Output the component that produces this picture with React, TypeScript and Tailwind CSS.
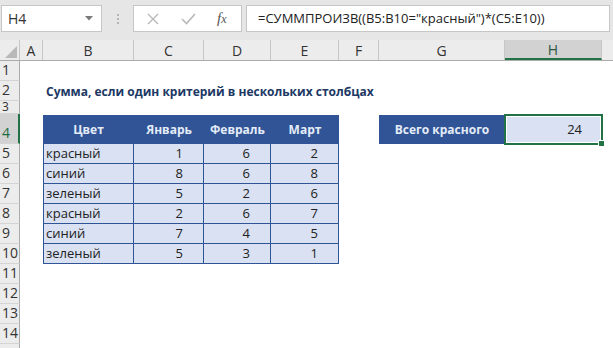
import React from 'react';

const FONT = "font-['Open_Sans','Noto_Sans',sans-serif]";

const COLUMNS = [
  { name: 'A', cls: 'w-[23px]' },
  { name: 'B', cls: 'w-[91px]' },
  { name: 'C', cls: 'w-[70px]' },
  { name: 'D', cls: 'w-[67px]' },
  { name: 'E', cls: 'w-[68px]' },
  { name: 'F', cls: 'w-[40px]' },
  { name: 'G', cls: 'w-[126px]' },
  { name: 'H', cls: 'w-[97px]' },
];

const DATA: [string, number, number, number][] = [
  ['красный', 1, 6, 2],
  ['синий', 8, 6, 8],
  ['зеленый', 5, 2, 6],
  ['красный', 2, 6, 7],
  ['синий', 7, 4, 5],
  ['зеленый', 5, 3, 1],
];

const RowHead: React.FC<{ n: number; active?: boolean; short?: boolean }> = ({ n, active, short }) => (
  <div
    className={`w-[20px] shrink-0 overflow-hidden flex pl-[2px] leading-none border-b border-[#d4d4d4] ${
      short ? 'items-start text-[12px]' : 'items-end pb-[3px] text-[14px]'
    } ${
      active ? 'bg-[#d2d2d2] border-r-2 border-r-[#217346] text-[#1e6b3f]' : 'bg-[#ececec] border-r border-r-[#ababab] text-[#333]'
    }`}
  >
    {n}
  </div>
);

const Toolbar: React.FC = () => (
  <div className="h-[40px] bg-[#e6e6e6] flex items-start pt-[5px] pl-px">
    <div className="w-[101px] h-[27px] bg-white border border-[#c6c6c6] flex items-center justify-between pl-[6px] pr-[8px]">
      <span className="text-[14px] text-[#333]">H4</span>
      <svg width="8" height="5" viewBox="0 0 8 5">
        <path d="M0 0h8L4 4.5z" fill="#7a7a7a" />
      </svg>
    </div>
    <div className="w-[31px] h-[27px] flex flex-col items-center justify-center gap-[2px]">
      <span className="w-[2px] h-[2px] bg-[#b5b5b5]" />
      <span className="w-[2px] h-[2px] bg-[#b5b5b5]" />
      <span className="w-[2px] h-[2px] bg-[#b5b5b5]" />
    </div>
    <div className="w-[109px] h-[27px] bg-white border border-[#c6c6c6] flex items-center pl-[13px]">
      <svg width="12" height="12" viewBox="0 0 12 12">
        <path d="M1 1l10 10M11 1L1 11" stroke="#b8b8b8" strokeWidth="1.3" />
      </svg>
      <svg width="15" height="12" viewBox="0 0 15 12" className="ml-[22px]">
        <path d="M1 6l4.5 4.5L14 1" stroke="#b8b8b8" strokeWidth="1.6" fill="none" />
      </svg>
      <span className="ml-[21px] font-['Liberation_Serif',serif] italic text-[15px] text-[#555] leading-none">
        f<span className="text-[12px]">x</span>
      </span>
    </div>
    <div className="ml-[4px] w-[364px] h-[27px] bg-white border border-[#c6c6c6] flex items-center pl-[11px] text-[13px] text-[#222] whitespace-nowrap">
      =СУММПРОИЗВ((B5:B10="красный")*(C5:E10))
    </div>
  </div>
);

const ColumnHeaders: React.FC = () => (
  <div className="flex h-[21px] bg-[#ececec] border-b border-[#ababab]">
    <div className="w-[20px] shrink-0 border-r border-[#c6c6c6] flex items-end justify-end p-[2px]">
      <svg width="12" height="12" viewBox="0 0 12 12">
        <path d="M12 0V12H0z" fill="#b9b9b9" />
      </svg>
    </div>
    {COLUMNS.map((c) => (
      <div
        key={c.name}
        className={`${c.cls} shrink-0 flex items-center justify-center text-[14px] border-r border-[#c6c6c6] ${
          c.name === 'H' ? 'bg-[#d2d2d2] border-b-2 border-b-[#217346] text-[#2a5540]' : 'text-[#333]'
        }`}
      >
        {c.name}
      </div>
    ))}
    <div className="flex-1" />
  </div>
);

const App: React.FC = () => {
  return (
    <div className={`w-[613px] h-[348px] overflow-hidden bg-white ${FONT}`}>
      <Toolbar />
      <ColumnHeaders />

      {/* Row 1 */}
      <div className="flex h-[20px]">
        <RowHead n={1} />
      </div>

      {/* Row 2: title */}
      <div className="flex h-[20px]">
        <RowHead n={2} />
        <div className="w-[23px] shrink-0" />
        <div className="pl-[3px] pt-px flex items-center whitespace-nowrap text-[12px] font-bold text-[#203864]">
          Сумма, если один критерий в нескольких столбцах
        </div>
      </div>

      {/* Row 3 */}
      <div className="flex h-[13px]">
        <RowHead n={3} short />
      </div>

      {/* Row 4: headers */}
      <div className="flex h-[30px]">
        <RowHead n={4} active />
        <div className="w-[23px] shrink-0" />
        <div className="flex mt-px bg-[#305496] text-[#e4ecf8] font-bold text-[12px]">
          {['Цвет', 'Январь', 'Февраль', 'Март'].map((h, i) => (
            <div key={h} className={`${COLUMNS[i + 1].cls} flex items-center justify-center pt-px`}>
              {h}
            </div>
          ))}
        </div>
        <div className="w-[40px] shrink-0" />
        <div className="w-[126px] shrink-0 mt-px pt-px bg-[#305496] text-[#e4ecf8] font-bold text-[12px] flex items-center justify-center">
          Всего красного
        </div>
        <div className="relative w-[97px] shrink-0 mt-px bg-[#d9e1f2] flex items-center justify-end pr-[20px] text-[13px] text-[#222]">
          24
          <div className="absolute -left-px -top-px -right-px -bottom-px border-2 border-[#217346]">
            <div className="w-full h-full border border-white" />
          </div>
          <div className="absolute -right-[3px] -bottom-[3px] w-[7px] h-[7px] bg-[#217346] border border-white" />
        </div>
      </div>

      {/* Rows 5-10 */}
      {DATA.map((r, i) => (
        <div key={i} className="flex h-[20px]">
          <RowHead n={i + 5} />
          <div className="w-[23px] shrink-0" />
          <div className="w-[91px] shrink-0 bg-[#d9e1f2] border-x border-b border-[#2f5597] flex items-center pl-[2px] text-[13px] text-[#222]">
            {r[0]}
          </div>
          {[r[1], r[2], r[3]].map((v, j) => (
            <div
              key={j}
              className={`${COLUMNS[j + 2].cls} shrink-0 bg-[#d9e1f2] border-r border-b border-[#2f5597] flex items-center justify-end pr-[20px] text-[13px] text-[#222]`}
            >
              {v}
            </div>
          ))}
        </div>
      ))}

      {/* Rows 11-15 */}
      {[11, 12, 13, 14, 15].map((n) => (
        <div key={n} className="flex h-[20px]">
          <RowHead n={n} />
        </div>
      ))}
    </div>
  );
};

export default App;
